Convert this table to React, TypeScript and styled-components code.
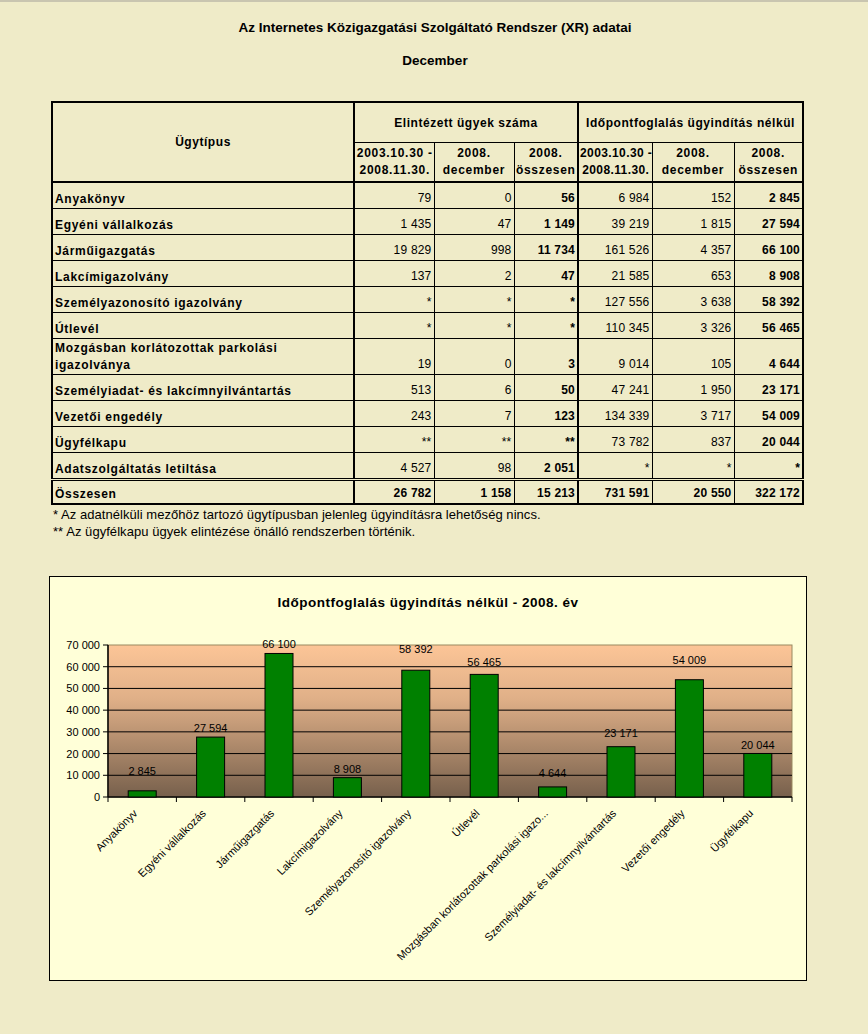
import styled, { createGlobalStyle } from "styled-components";

const GlobalStyle = createGlobalStyle`
  html, body {
    margin: 0;
    padding: 0;
  }
  body {
    background: #efebc8;
    border-top: 2px solid #c9c5b0;
    font-family: "Liberation Sans", Arial, sans-serif;
    color: #000;
  }
`;

type Row = {
  name: string;
  e1: string;
  e2: string;
  e3: string;
  i1: string;
  i2: string;
  i3: string;
  tall?: boolean;
};

const rows: Row[] = [
  { name: "Anyakönyv", e1: "79", e2: "0", e3: "56", i1: "6 984", i2: "152", i3: "2 845" },
  { name: "Egyéni vállalkozás", e1: "1 435", e2: "47", e3: "1 149", i1: "39 219", i2: "1 815", i3: "27 594" },
  { name: "Járműigazgatás", e1: "19 829", e2: "998", e3: "11 734", i1: "161 526", i2: "4 357", i3: "66 100" },
  { name: "Lakcímigazolvány", e1: "137", e2: "2", e3: "47", i1: "21 585", i2: "653", i3: "8 908" },
  { name: "Személyazonosító igazolvány", e1: "*", e2: "*", e3: "*", i1: "127 556", i2: "3 638", i3: "58 392" },
  { name: "Útlevél", e1: "*", e2: "*", e3: "*", i1: "110 345", i2: "3 326", i3: "56 465" },
  { name: "Mozgásban korlátozottak parkolási igazolványa", e1: "19", e2: "0", e3: "3", i1: "9 014", i2: "105", i3: "4 644", tall: true },
  { name: "Személyiadat- és lakcímnyilvántartás", e1: "513", e2: "6", e3: "50", i1: "47 241", i2: "1 950", i3: "23 171" },
  { name: "Vezetői engedély", e1: "243", e2: "7", e3: "123", i1: "134 339", i2: "3 717", i3: "54 009" },
  { name: "Ügyfélkapu", e1: "**", e2: "**", e3: "**", i1: "73 782", i2: "837", i3: "20 044" },
  { name: "Adatszolgáltatás letiltása", e1: "4 527", e2: "98", e3: "2 051", i1: "*", i2: "*", i3: "*" },
];

const bars = [
  { label: "Anyakönyv", value: 2845, labelY: 144 },
  { label: "Egyéni vállalkozás", value: 27594, labelY: 101 },
  { label: "Járműigazgatás", value: 66100, labelY: 17 },
  { label: "Lakcímigazolvány", value: 8908, labelY: 142 },
  { label: "Személyazonosító igazolvány", value: 58392, labelY: 22 },
  { label: "Útlevél", value: 56465, labelY: 35 },
  { label: "Mozgásban korlátozottak parkolási igazo...", value: 4644, labelY: 146 },
  { label: "Személyiadat- és lakcímnyilvántartás", value: 23171, labelY: 106 },
  { label: "Vezetői engedély", value: 54009, labelY: 33 },
  { label: "Ügyfélkapu", value: 20044, labelY: 118 },
];

const fmt = (n: number) => String(n).replace(/\B(?=(\d{3})+(?!\d))/g, " ");

const Chart = () => {
  const x0 = 58;
  const x1 = 742;
  const y0 = 18;
  const y1 = 170;
  const step = (x1 - x0) / bars.length;
  const scale = (y1 - y0) / 70000;
  const grid = [0, 10000, 20000, 30000, 40000, 50000, 60000, 70000];
  return (
    <svg width="756" height="353" viewBox="0 0 756 353">
      <defs>
        <linearGradient id="plotbg" x1="0" y1="0" x2="0" y2="1">
          <stop offset="0" stopColor="#fcc597" />
          <stop offset="0.35" stopColor="#e0b088" />
          <stop offset="1" stopColor="#77604c" />
        </linearGradient>
      </defs>
      <rect x={x0} y={y0} width={x1 - x0} height={y1 - y0} fill="url(#plotbg)" stroke="#9a8a60" />
      {grid.map((g) => {
        const y = y1 - g * scale;
        return (
          <g key={g}>
            {g > 0 && g < 70000 && <line x1={x0} x2={x1} y1={y} y2={y} stroke="#000" strokeWidth="1" />}
            <line x1={x0 - 5} x2={x0} y1={y} y2={y} stroke="#000" />
            <text x={50} y={y + 4} textAnchor="end" fontSize="11" fontFamily="Liberation Sans, Arial, sans-serif">
              {fmt(g)}
            </text>
          </g>
        );
      })}
      <line x1={x0} x2={x0} y1={y0} y2={y1} stroke="#000" strokeWidth="1.5" />
      <line x1={x0} x2={x1} y1={y1} y2={y1} stroke="#000" strokeWidth="1.5" />
      {bars.map((b, i) => {
        const cx = x0 + step * (i + 0.5);
        const h = b.value * scale;
        return (
          <g key={b.label}>
            <line x1={x0 + step * i} x2={x0 + step * i} y1={y1} y2={y1 + 5} stroke="#000" />
            <rect x={cx - 14} y={y1 - h} width={28} height={h} fill="#008000" stroke="#000" strokeWidth="1" />
            <text x={cx} y={b.labelY + 4} textAnchor="middle" fontSize="11" fontFamily="Liberation Sans, Arial, sans-serif">
              {fmt(b.value)}
            </text>
            <text
              transform={`translate(${cx - 4} ${y1 + 17}) rotate(-45)`}
              textAnchor="end"
              fontSize="11"
              fontFamily="Liberation Sans, Arial, sans-serif"
            >
              {b.label}
            </text>
          </g>
        );
      })}
      <line x1={x1} x2={x1} y1={y1} y2={y1 + 5} stroke="#000" />
    </svg>
  );
};

export default function App() {
  return (
    <>
      <GlobalStyle />
      <Page>
        <Title>Az Internetes Közigazgatási Szolgáltató Rendszer (XR) adatai</Title>
        <Title>December</Title>
        <Table>
          <colgroup>
            <col style={{ width: 302 }} />
            <col style={{ width: 80 }} />
            <col style={{ width: 80 }} />
            <col style={{ width: 64 }} />
            <col style={{ width: 74 }} />
            <col style={{ width: 82 }} />
            <col style={{ width: 69 }} />
          </colgroup>
          <thead>
            <tr>
              <Th rowSpan={2} $thickRight>
                Ügytípus
              </Th>
              <Th colSpan={3} $thickRight $h={39}>
                Elintézett ügyek száma
              </Th>
              <Th colSpan={3} $h={39}>
                Időpontfoglalás ügyindítás nélkül
              </Th>
            </tr>
            <tr>
              <Sub $h={38}>
                <Clip>2003.10.30 -<br />2008.11.30.</Clip>
              </Sub>
              <Sub>2008.<br />december</Sub>
              <Sub $thickRight>2008.<br />összesen</Sub>
              <Sub $tight>
                <Clip>2003.10.30 -<br />2008.11.30.</Clip>
              </Sub>
              <Sub>2008.<br />december</Sub>
              <Sub>2008.<br />összesen</Sub>
            </tr>
          </thead>
          <tbody>
            {rows.map((r) => (
              <tr key={r.name}>
                <Name $h={r.tall ? 35 : 25}>{r.name}</Name>
                <Num>{r.e1}</Num>
                <Num>{r.e2}</Num>
                <Num $bold $thickRight>{r.e3}</Num>
                <Num>{r.i1}</Num>
                <Num>{r.i2}</Num>
                <Num $bold>{r.i3}</Num>
              </tr>
            ))}
            <TotalRow>
              <Name $h={22}>Összesen</Name>
              <Num $bold>26 782</Num>
              <Num $bold>1 158</Num>
              <Num $bold $thickRight>15 213</Num>
              <Num $bold>731 591</Num>
              <Num $bold>20 550</Num>
              <Num $bold>322 172</Num>
            </TotalRow>
          </tbody>
        </Table>
        <Notes>
          <p>* Az adatnélküli mezőhöz tartozó ügytípusban jelenleg ügyindításra lehetőség nincs.</p>
          <p>** Az ügyfélkapu ügyek elintézése önálló rendszerben történik.</p>
        </Notes>
        <ChartBox>
          <ChartTitle>Időpontfoglalás ügyindítás nélkül - 2008. év</ChartTitle>
          <Chart />
        </ChartBox>
      </Page>
    </>
  );
}

const Page = styled.div`
  width: 868px;
  padding-top: 18px;
  padding-bottom: 50px;
`;

const Title = styled.div`
  text-align: center;
  font-weight: bold;
  font-size: 13.5px;
  line-height: 16px;
  margin-bottom: 17px;
  padding-left: 2px;
`;

const Table = styled.table`
  margin-left: 51px;
  margin-top: 32px;
  width: 751px;
  table-layout: fixed;
  border-collapse: collapse;
  border: 2px solid #000;
  font-size: 12px;
`;

const Th = styled.th<{ $thickRight?: boolean; $h?: number }>`
  border: 1px solid #000;
  border-right-width: ${(p) => (p.$thickRight ? 2 : 1)}px;
  border-bottom-width: 2px;
  height: ${(p) => (p.$h ? `${p.$h}px` : "auto")};
  font-weight: bold;
  text-align: center;
  vertical-align: middle;
  padding: 0 2px;
  letter-spacing: 0.55px;
  thead tr:first-child &:not(:first-child) {
    border-bottom-width: 1px;
  }
`;

const Sub = styled.th<{ $thickRight?: boolean; $h?: number; $tight?: boolean }>`
  border: 1px solid #000;
  border-right-width: ${(p) => (p.$thickRight ? 2 : 1)}px;
  border-bottom-width: 2px;
  height: ${(p) => (p.$h ? `${p.$h}px` : "auto")};
  font-weight: bold;
  text-align: center;
  vertical-align: middle;
  padding: 0;
  line-height: 17px;
  letter-spacing: ${(p) => (p.$tight ? 0.4 : 0.7)}px;
`;

const Clip = styled.div`
  overflow: hidden;
  white-space: nowrap;
  padding-left: 1px;
`;

const Name = styled.td<{ $h: number }>`
  border: 1px solid #000;
  border-right-width: 2px;
  height: ${(p) => p.$h}px;
  padding: 0 2px 0 2px;
  font-weight: bold;
  text-align: left;
  vertical-align: bottom;
  line-height: 17px;
  letter-spacing: 0.7px;
`;

const Num = styled.td<{ $bold?: boolean; $thickRight?: boolean }>`
  border: 1px solid #000;
  border-right-width: ${(p) => (p.$thickRight ? 2 : 1)}px;
  padding: 0 2px 1px 0;
  font-weight: ${(p) => (p.$bold ? "bold" : "normal")};
  text-align: right;
  vertical-align: bottom;
  line-height: 17px;
  letter-spacing: 0.2px;
`;

const TotalRow = styled.tr`
  td {
    border-top: 3px double #000;
  }
`;

const Notes = styled.div`
  margin-left: 53px;
  margin-top: 1px;
  font-size: 13px;
  line-height: 17px;
  letter-spacing: 0.05px;
  p {
    margin: 0;
  }
`;

const ChartBox = styled.div`
  margin-left: 49px;
  margin-top: 36px;
  width: 756px;
  height: 403px;
  border: 1px solid #000;
  background: #ffffd8;
  display: flex;
  flex-direction: column;
`;

const ChartTitle = styled.div`
  height: 50px;
  line-height: 52px;
  text-align: center;
  font-weight: bold;
  font-size: 13.5px;
  letter-spacing: 0.5px;
`;
